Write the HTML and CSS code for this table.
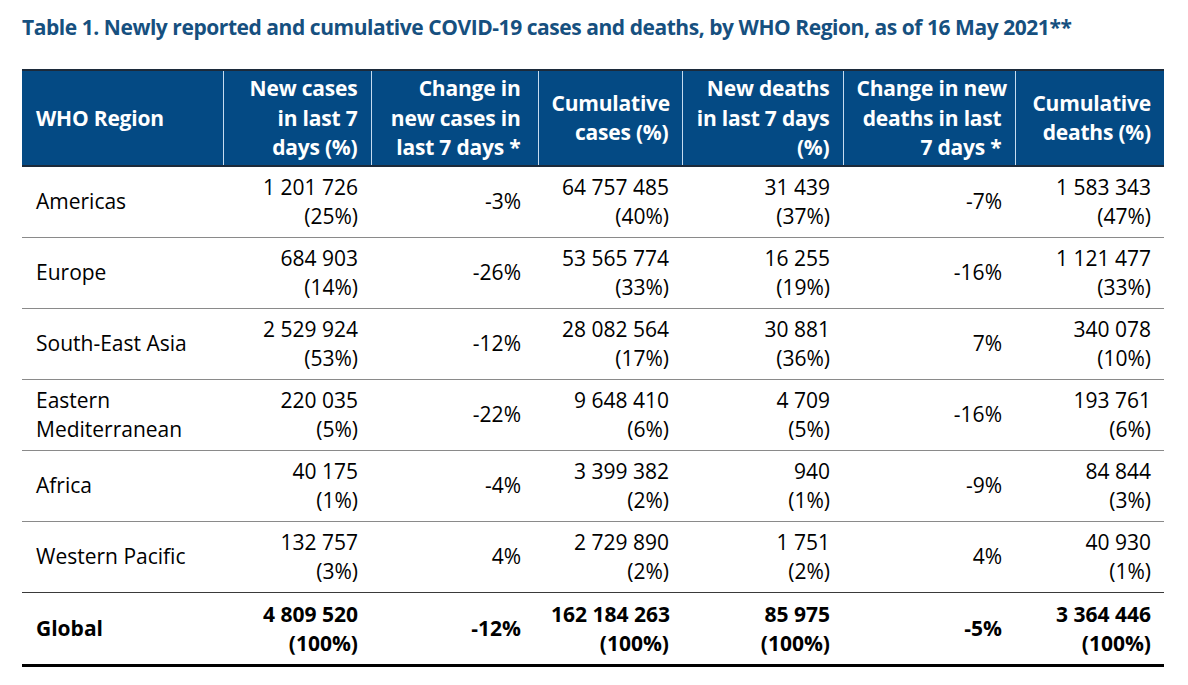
FILE: index.html
```html
<!DOCTYPE html>
<html lang="en">
<head>
<meta charset="utf-8">
<title>Table 1</title>
<link rel="stylesheet" href="styles.css">
</head>
<body>
<h1 class="title">Table 1. Newly reported and cumulative COVID-19 cases and deaths, by WHO Region, as of 16 May 2021**</h1>
<table class="data">
  <colgroup>
    <col class="c1"><col class="c2"><col class="c3"><col class="c4"><col class="c5"><col class="c6"><col class="c7">
  </colgroup>
  <thead>
    <tr>
      <th class="region">WHO Region</th>
      <th>New cases<br>in last 7<br>days (%)</th>
      <th class="pad-wide">Change in<br>new cases in<br>last 7 days *</th>
      <th>Cumulative<br>cases (%)</th>
      <th>New deaths<br>in last 7 days<br>(%)</th>
      <th>Change in new<br>deaths in last<br>7 days *</th>
      <th>Cumulative<br>deaths (%)</th>
    </tr>
  </thead>
  <tbody>
    <tr>
      <td class="region">Americas</td>
      <td>1 201 726<br>(25%)</td>
      <td class="pad-wide">-3%</td>
      <td>64 757 485<br>(40%)</td>
      <td>31 439<br>(37%)</td>
      <td>-7%</td>
      <td>1 583 343<br>(47%)</td>
    </tr>
    <tr>
      <td class="region">Europe</td>
      <td>684 903<br>(14%)</td>
      <td class="pad-wide">-26%</td>
      <td>53 565 774<br>(33%)</td>
      <td>16 255<br>(19%)</td>
      <td>-16%</td>
      <td>1 121 477<br>(33%)</td>
    </tr>
    <tr>
      <td class="region">South-East Asia</td>
      <td>2 529 924<br>(53%)</td>
      <td class="pad-wide">-12%</td>
      <td>28 082 564<br>(17%)</td>
      <td>30 881<br>(36%)</td>
      <td>7%</td>
      <td>340 078<br>(10%)</td>
    </tr>
    <tr>
      <td class="region">Eastern<br>Mediterranean</td>
      <td>220 035<br>(5%)</td>
      <td class="pad-wide">-22%</td>
      <td>9 648 410<br>(6%)</td>
      <td>4 709<br>(5%)</td>
      <td>-16%</td>
      <td>193 761<br>(6%)</td>
    </tr>
    <tr>
      <td class="region">Africa</td>
      <td>40 175<br>(1%)</td>
      <td class="pad-wide">-4%</td>
      <td>3 399 382<br>(2%)</td>
      <td>940<br>(1%)</td>
      <td>-9%</td>
      <td>84 844<br>(3%)</td>
    </tr>
    <tr>
      <td class="region">Western Pacific</td>
      <td>132 757<br>(3%)</td>
      <td class="pad-wide">4%</td>
      <td>2 729 890<br>(2%)</td>
      <td>1 751<br>(2%)</td>
      <td>4%</td>
      <td>40 930<br>(1%)</td>
    </tr>
    <tr class="total">
      <td class="region">Global</td>
      <td>4 809 520<br>(100%)</td>
      <td class="pad-wide">-12%</td>
      <td>162 184 263<br>(100%)</td>
      <td>85 975<br>(100%)</td>
      <td>-5%</td>
      <td>3 364 446<br>(100%)</td>
    </tr>
  </tbody>
</table>
</body>
</html>
```

FILE: styles.css
```css
html, body {
  margin: 0;
  background: #ffffff;
}
body {
  padding: 12px 22px 0 22px;
  font-family: "Open Sans", Lato, sans-serif;
  color: #000000;
}
.title {
  margin: 0;
  font-size: 21px;
  line-height: 30px;
  font-weight: 700;
  color: #16507f;
  white-space: nowrap;
  letter-spacing: -0.45px;
}
.data {
  margin-top: 27px;
  width: 1142px;
  border-collapse: collapse;
  table-layout: fixed;
  font-size: 21px;
}
.c1 { width: 201px; }
.c2 { width: 148px; }
.c3 { width: 167px; }
.c4 { width: 144px; }
.c5 { width: 161px; }
.c6 { width: 172px; }
.c7 { width: 149px; }

.data th {
  background: #044a84;
  color: #ffffff;
  font-weight: 700;
  text-align: right;
  vertical-align: middle;
  line-height: 29.5px;
  padding: 3px 13px 2px 13px;
  white-space: nowrap;
  letter-spacing: -0.2px;
  border-top: 2px solid #1c2a3a;
  border-bottom: 2px solid #1c2a3a;
  border-left: 1px solid #c6dbef;
  border-right: 1px solid #c6dbef;
}
.data th:first-child { border-left: none; }
.data th:last-child { border-right: none; }

.data td {
  text-align: right;
  vertical-align: middle;
  line-height: 29.5px;
  padding: 6px 13px 5px 13px;
  white-space: nowrap;
  border-bottom: 1px solid #8a8a8a;
}
.data .region {
  text-align: left;
  padding-left: 14px;
}
.data .pad-wide {
  padding-right: 17px;
}
.data tbody tr:nth-last-child(2) td {
  border-bottom: 1px solid #3a3a3a;
}
.data tr.total td {
  font-weight: 700;
  padding-top: 7px;
  border-bottom: 3px solid #000000;
}
```
